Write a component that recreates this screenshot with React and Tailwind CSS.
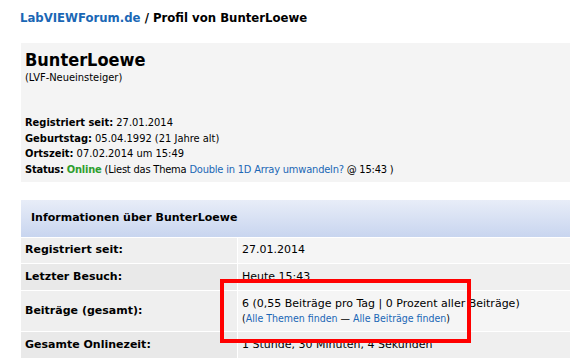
import React from 'react';

const rows = [
  { label: 'Registriert seit:', value: '27.01.2014', h: 'h-[25px]', odd: true },
  { label: 'Letzter Besuch:', value: 'Heute 15:43', h: 'h-[26px]', odd: false },
  { label: 'Beiträge (gesamt):', h: 'h-[40px]', odd: true, posts: true },
  { label: 'Gesamte Onlinezeit:', value: '1 Stunde, 30 Minuten, 4 Sekunden', h: 'h-[26px]', odd: false },
];

export default function App() {
  return (
    <div className="relative w-[570px] h-[358px] overflow-hidden bg-white text-black font-['Tahoma','DejaVu_Sans_Condensed','DejaVu_Sans',sans-serif]">
      <div className="pl-[20px] pt-[10px] h-[43px] text-[13px] leading-[16px] font-bold">
        <span className="text-[#1a67b5]">LabVIEWForum.de</span> / Profil von BunterLoewe
      </div>

      <div className="ml-[21px] w-[560px] h-[139px] bg-[#f4f4f4] pl-[4px] pt-[6px]">
        <div className="text-[18px] leading-[22px] font-bold">BunterLoewe</div>
        <div className="text-[11px] leading-[14px]">(LVF-Neueinsteiger)</div>
        <div className="mt-[30px] text-[11px] leading-[15.5px]">
          <div><b>Registriert seit:</b> 27.01.2014</div>
          <div><b>Geburtstag:</b> 05.04.1992 (21 Jahre alt)</div>
          <div><b>Ortszeit:</b> 07.02.2014 um 15:49</div>
          <div className="tracking-[-0.2px]">
            <b>Status:</b> <b className="text-[#2e9e2e]">Online</b> (Liest das Thema{' '}
            <span className="text-[#1a67b5]">Double in 1D Array umwandeln?</span> @ 15:43 )
          </div>
        </div>
      </div>

      <div className="ml-[21px] mt-[18px] w-[560px] font-['Verdana','DejaVu_Sans',sans-serif] text-[11px]">
        <div className="h-[37px] bg-gradient-to-b from-[#e8edf8] to-[#c8d5ef] pl-[10px] flex items-center font-bold text-[11px]">
          Informationen über BunterLoewe
        </div>
        {rows.map((r) => (
          <div key={r.label} className={`flex gap-[1px] mt-[1px] ${r.h}`}>
            <div className={`w-[216px] shrink-0 pl-[4px] flex items-center font-bold text-[11px] ${r.odd ? 'bg-[#efefef]' : 'bg-[#e9e9e9]'}`}>
              {r.label}
            </div>
            <div className={`flex-1 pl-[4px] flex flex-col justify-center ${r.odd ? 'bg-[#f5f5f5]' : 'bg-[#efefef]'}`}>
              {r.posts ? (
                <>
                  <div className="leading-[15px]">6 (0,55 Beiträge pro Tag | 0 Prozent aller Beiträge)</div>
                  <div className="leading-[15px] text-[10.5px] font-['Tahoma','DejaVu_Sans_Condensed','DejaVu_Sans',sans-serif]">
                    (<span className="text-[#1a67b5]">Alle Themen finden</span> — <span className="text-[#1a67b5]">Alle Beiträge finden</span>)
                  </div>
                </>
              ) : (
                r.value
              )}
            </div>
          </div>
        ))}
      </div>

      <div className="absolute left-[220px] top-[279px] w-[251px] h-[64px] border-[4px] border-[#ff0000]" />
    </div>
  );
}
